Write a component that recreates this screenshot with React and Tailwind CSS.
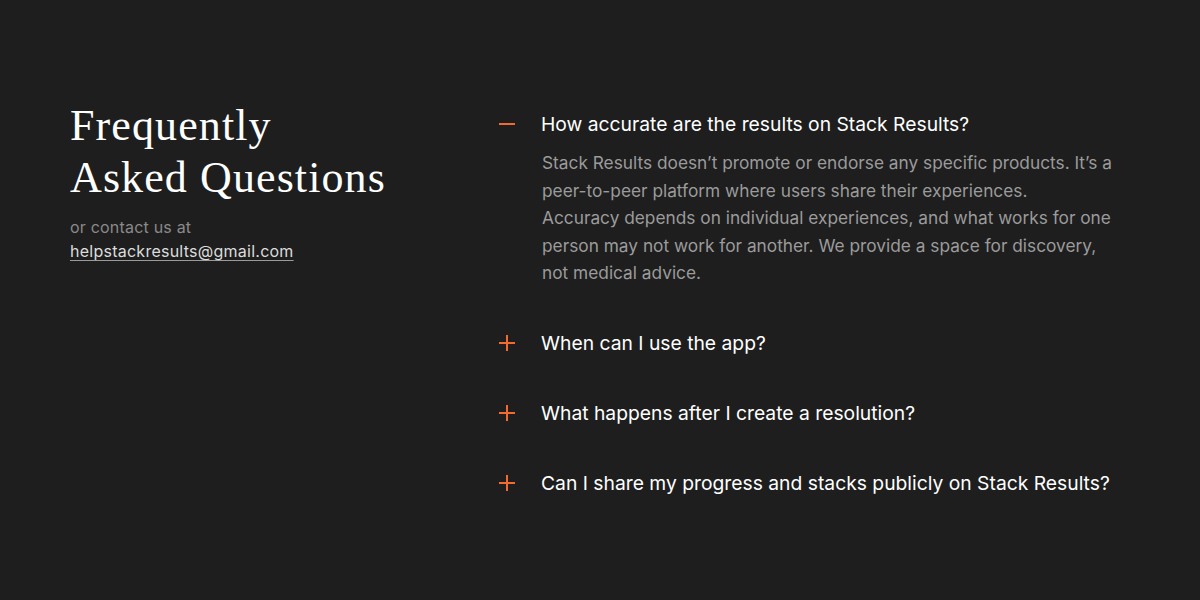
import { useState } from "react";

const faqs = [
  {
    q: "How accurate are the results on Stack Results?",
    a: [
      "Stack Results doesn\u2019t promote or endorse any specific products. It\u2019s a",
      "peer-to-peer platform where users share their experiences.",
      "Accuracy depends on individual experiences, and what works for one",
      "person may not work for another. We provide a space for discovery,",
      "not medical advice.",
    ],
  },
  { q: "When can I use the app?", a: null },
  { q: "What happens after I create a resolution?", a: null },
  { q: "Can I share my progress and stacks publicly on Stack Results?", a: null },
];

function Icon({ open }) {
  return (
    <svg viewBox="0 0 16 16" className="h-4 w-4 text-[#f26a2e]" fill="none" stroke="currentColor" strokeWidth="2" aria-hidden="true">
      <path d="M0 8h16" />
      {!open ? <path d="M8 0v16" /> : null}
    </svg>
  );
}

export default function App() {
  const [openIdx, setOpenIdx] = useState(0);

  return (
    <div className="min-h-[600px] w-full bg-[#1e1e1e] font-['Inter',sans-serif]">
      <div className="flex px-[70px] pt-[100px]">
        <div className="w-[429px] shrink-0">
          <h2 className="font-['Liberation_Serif',serif] text-[44px] leading-[52px] tracking-[1.1px] text-white">
            Frequently
            <br />
            Asked Questions
          </h2>
          <p className="mt-[12px] text-[16px] leading-[23px] tracking-[0.2px] text-[#8a8a8a]">or contact us at</p>
          <a href="#" className="text-[16px] leading-[23px] tracking-[0.25px] text-[#dcdcdc] underline decoration-[#9a9a9a] underline-offset-[3px]">
            helpstackresults@gmail.com
          </a>
        </div>

        <div className="flex flex-col gap-[42px] pt-[10px]">
          {faqs.map((item, i) => {
            const open = openIdx === i;
            return (
              <div key={item.q}>
                <button
                  type="button"
                  onClick={() => setOpenIdx(open ? -1 : i)}
                  className="flex items-center text-left"
                >
                  <span className="flex w-[42px] shrink-0 items-center">
                    <Icon open={open} />
                  </span>
                  <span className="text-[19.3px] leading-7 text-white">{item.q}</span>
                </button>
                {open && item.a ? (
                  <p className="ml-[43px] mt-[11px] whitespace-nowrap text-[17.3px] leading-[27.5px] text-[#9b9b9b]">
                    {item.a.map((line, j) => (
                      <span key={j} className="block">
                        {line}
                      </span>
                    ))}
                  </p>
                ) : null}
              </div>
            );
          })}
        </div>
      </div>
    </div>
  );
}
